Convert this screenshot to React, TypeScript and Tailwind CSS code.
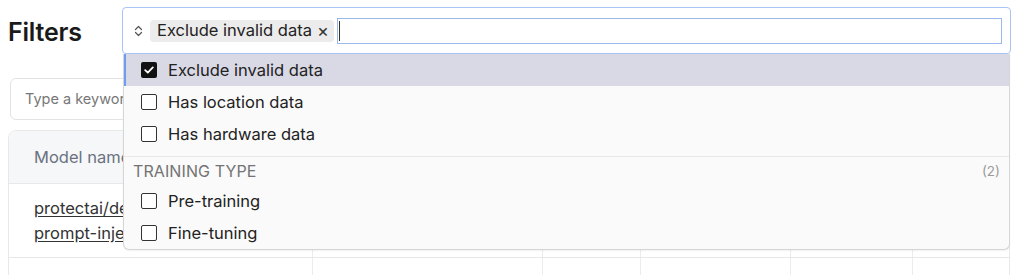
import React from "react";

const COLS = [304, 230, 98, 150, 122, 96];

function UpDown() {
  return (
    <svg width="9" height="12" viewBox="0 0 9 12" fill="none" className="shrink-0">
      <path d="M1.5 4.5 L4.5 1.5 L7.5 4.5" stroke="#555" strokeWidth="1.2" strokeLinecap="round" strokeLinejoin="round" />
      <path d="M1.5 7.5 L4.5 10.5 L7.5 7.5" stroke="#555" strokeWidth="1.2" strokeLinecap="round" strokeLinejoin="round" />
    </svg>
  );
}

function Box({ checked }: { checked?: boolean }) {
  if (checked) {
    return (
      <span className="w-4 h-4 shrink-0 rounded-[2px] bg-[#111] flex items-center justify-center">
        <svg width="10" height="8" viewBox="0 0 10 8" fill="none">
          <path d="M1.2 4.2 L3.8 6.6 L8.8 1.4" stroke="#fff" strokeWidth="1.8" strokeLinecap="round" strokeLinejoin="round" />
        </svg>
      </span>
    );
  }
  return <span className="w-4 h-4 shrink-0 rounded-[2px] border-[1.5px] border-[#333] bg-white" />;
}

function Option({ label, checked, active }: { label: string; checked?: boolean; active?: boolean }) {
  return (
    <div
      className={
        active
          ? "h-8 flex items-center gap-[11px] pl-[15px] bg-[#d9d8e5] border-l-2 border-[#6d9cf0]"
          : "h-8 flex items-center gap-[11px] pl-[17px]"
      }
    >
      <Box checked={checked} />
      <span className="text-[16.5px] text-[#222] leading-none">{label}</span>
    </div>
  );
}

export default function App() {
  return (
    <div className="relative w-[1024px] h-[275px] overflow-hidden bg-white font-['Inter',sans-serif] text-[#1f1f1f]">
      {/* Header row */}
      <div className="flex items-start pt-[7px] relative z-10">
        <h1 className="w-[122px] shrink-0 pl-2 pt-[13px] text-[25px] font-semibold leading-none tracking-[-0.2px] text-[#1a1a1a]">Filters</h1>
        <div className="relative w-[889px]">
          <div className="h-[47px] rounded-[4px] border border-[#a9c3f2] bg-white flex items-center pl-[11px] pr-2 gap-[7px]">
            <UpDown />
            <span className="h-[22px] flex items-center gap-[5px] rounded-[4px] bg-[#ececec] pl-[7px] pr-[5px] text-[16.5px] text-[#222] leading-none">
              Exclude invalid data
              <span className="text-[18px] text-[#333]">×</span>
            </span>
            <div className="flex-1 h-[26px] -ml-[4px] border border-[#9bb8ee] bg-white flex items-center">
              <span className="ml-px w-px h-[20px] bg-[#333]" />
            </div>
          </div>

          {/* Dropdown */}
          <div className="absolute left-px right-px top-full bg-[#fafafa] border border-t-0 border-[#d6d6d6] rounded-b-[6px] shadow-[0_1px_2px_rgba(0,0,0,0.06)]">
            <Option label="Exclude invalid data" checked active />
            <Option label="Has location data" />
            <Option label="Has hardware data" />
            <div className="h-[7px] border-b border-[#e8e8e8]" />
            <div className="h-[28px] flex items-center justify-between pl-[9px] pr-[9px]">
              <span className="text-[16px] text-[#737373] tracking-[0.1px]">TRAINING TYPE</span>
              <span className="text-[13.5px] text-[#9a9a9a]">(2)</span>
            </div>
            <Option label="Pre-training" />
            <Option label="Fine-tuning" />
          </div>
        </div>
      </div>

      {/* Search */}
      <div className="pl-[10px] pt-[24px] pr-[14px]">
        <div className="h-[42px] w-[500px] rounded-[6px] border border-[#e3e3e3] flex items-center pl-[14px] text-[14.5px] text-[#777]">
          Type a keyword...
        </div>
      </div>

      {/* Table */}
      <div className="ml-[8px] mt-[10px] w-[1002px] border border-[#e8e8e8] rounded-t-[8px] overflow-hidden">
        <div className="flex h-[53px] bg-[#f6f7f9] border-b border-[#e8e8e8]">
          {COLS.map((w, i) => (
            <div key={i} style={{ width: w }} className="shrink-0 flex items-center pl-[25px] border-r border-[#ececec] last:border-r-0">
              {i === 0 && <span className="text-[16.5px] text-[#6b7280]">Model name</span>}
            </div>
          ))}
        </div>
        <div className="flex h-[74px] border-b border-[#e8e8e8]">
          {COLS.map((w, i) => (
            <div key={i} style={{ width: w }} className="shrink-0 flex items-center pl-[25px] pr-3 border-r border-[#ececec] last:border-r-0">
              {i === 0 && (
                <span className="text-[16.5px] leading-[25px] text-[#333] underline underline-offset-2">
                  protectai/deberta-v3-base-
                  <br />
                  prompt-injection-v2
                </span>
              )}
            </div>
          ))}
        </div>
        <div className="flex h-[40px]">
          {COLS.map((w, i) => (
            <div key={i} style={{ width: w }} className="shrink-0 border-r border-[#ececec] last:border-r-0" />
          ))}
        </div>
      </div>
    </div>
  );
}
